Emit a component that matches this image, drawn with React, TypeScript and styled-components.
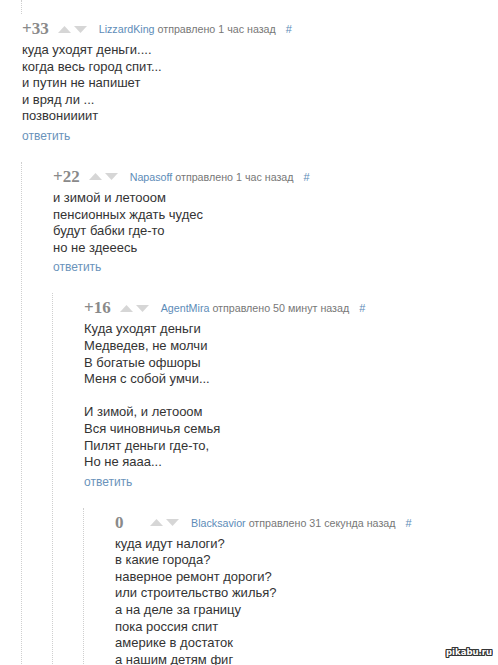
import React from 'react';
import styled, { createGlobalStyle } from 'styled-components';

const GlobalStyle = createGlobalStyle`
  html, body {
    margin: 0;
    padding: 0;
    background: #ffffff;
  }
  body {
    font-family: "Liberation Sans", Arial, sans-serif;
    width: 498px;
    height: 665px;
    overflow: hidden;
  }
`;

const Page = styled.div`
  position: relative;
  width: 498px;
  height: 665px;
  overflow: hidden;
  padding-left: 22px;
  box-sizing: border-box;
`;

const PrevThread = styled.div`
  height: 14px;
  border-left: 1px dotted #cfcfcf;
  margin-left: -1px;
`;

const CommentBox = styled.div`
  display: flex;
  flex-direction: column;
`;

const Header = styled.div`
  display: flex;
  align-items: center;
  height: 22px;
  margin-top: 4px;
`;

const Rating = styled.span`
  font-family: "Liberation Serif", "Times New Roman", serif;
  font-weight: bold;
  font-size: 17px;
  color: #8a8a8a;
  min-width: 26px;
`;

const Arrows = styled.span`
  display: flex;
  gap: 3px;
  margin-left: 9px;
  margin-right: 12px;
`;

const Author = styled.a`
  font-size: 10.7px;
  color: #5d8cb8;
  text-decoration: none;
`;

const Meta = styled.span`
  font-size: 10.7px;
  color: #777777;
  margin-left: 3px;
`;

const Hash = styled.a`
  font-size: 11px;
  color: #5d8cb8;
  margin-left: 10px;
  text-decoration: none;
`;

const Body = styled.div`
  margin-top: 2px;
  font-size: 13px;
  line-height: 16.6px;
  color: #333333;
  white-space: pre-line;
`;

const Reply = styled.a`
  margin-top: 3px;
  font-size: 12px;
  line-height: 16px;
  color: #6a93bb;
  text-decoration: none;
`;

const Children = styled.div`
  margin-top: 18px;
  margin-left: -1px;
  padding-left: 31px;
  border-left: 1px dotted #cfcfcf;
`;

const Watermark = styled.div`
  position: absolute;
  right: 6px;
  bottom: 8px;
  font-family: "DejaVu Sans", sans-serif;
  font-size: 8.5px;
  font-weight: bold;
  color: #ffffff;
  text-shadow: 1px 0 0 #333, -1px 0 0 #333, 0 1px 0 #333, 0 -1px 0 #333,
    1px 1px 0 #333, -1px -1px 0 #333, 1px -1px 0 #333, -1px 1px 0 #333;
`;

const Triangle: React.FC<{ down?: boolean }> = ({ down }) => (
  <svg width="13" height="9" viewBox="0 0 13 9">
    <path d={down ? 'M0 1 L13 1 L6.5 8 Z' : 'M0 8 L13 8 L6.5 1 Z'} fill="#d6d6d6" />
  </svg>
);

type CommentData = {
  rating: string;
  author: string;
  time: string;
  text: string;
  reply?: boolean;
  child?: CommentData;
};

const thread: CommentData = {
  rating: '+33',
  author: 'LizzardKing',
  time: 'отправлено 1 час назад',
  text: 'куда уходят деньги....\nкогда весь город спит...\nи путин не напишет\nи вряд ли ...\nпозвониииит',
  reply: true,
  child: {
    rating: '+22',
    author: 'Napasoff',
    time: 'отправлено 1 час назад',
    text: 'и зимой и летооом\nпенсионных ждать чудес\nбудут бабки где-то\nно не здееесь',
    reply: true,
    child: {
      rating: '+16',
      author: 'AgentMira',
      time: 'отправлено 50 минут назад',
      text: 'Куда уходят деньги\nМедведев, не молчи\nВ богатые офшоры\nМеня с собой умчи...\n\u00a0\nИ зимой, и летооом\nВся чиновничья семья\nПилят деньги где-то,\nНо не яааа...',
      reply: true,
      child: {
        rating: '0',
        author: 'Blacksavior',
        time: 'отправлено 31 секунда назад',
        text: 'куда идут налоги?\nв какие города?\nнаверное ремонт дороги?\nили строительство жилья?\nа на деле за границу\nпока россия спит\nамерике в достаток\nа нашим детям фиг',
      },
    },
  },
};

const Comment: React.FC<{ data: CommentData }> = ({ data }) => (
  <CommentBox>
    <Header>
      <Rating>{data.rating}</Rating>
      <Arrows>
        <Triangle />
        <Triangle down />
      </Arrows>
      <Author href="#">{data.author}</Author>
      <Meta>{data.time}</Meta>
      <Hash href="#">#</Hash>
    </Header>
    <Body>{data.text}</Body>
    {data.reply && <Reply href="#">ответить</Reply>}
    {data.child && (
      <Children>
        <Comment data={data.child} />
      </Children>
    )}
  </CommentBox>
);

export default function App() {
  return (
    <Page>
      <GlobalStyle />
      <PrevThread />
      <Comment data={thread} />
      <Watermark>pikabu.ru</Watermark>
    </Page>
  );
}
